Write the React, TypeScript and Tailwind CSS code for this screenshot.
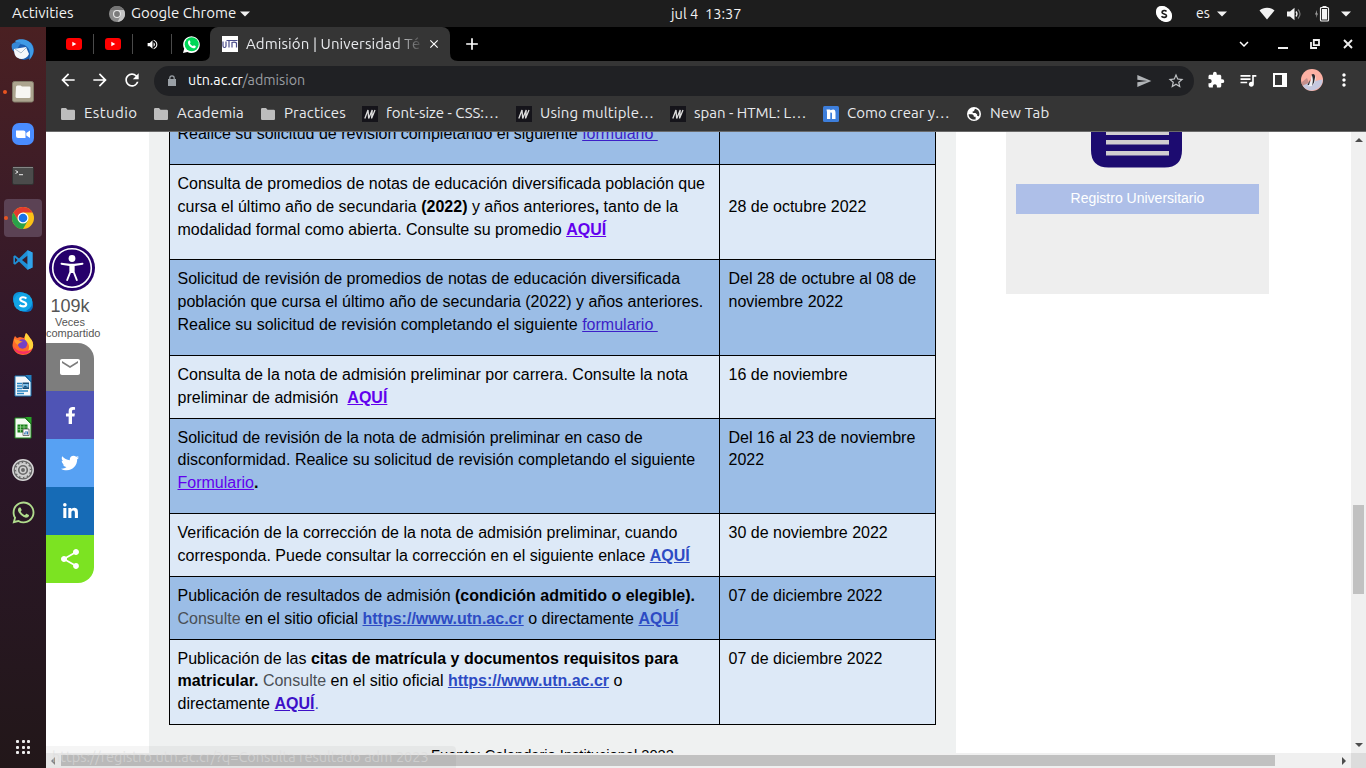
import type { ReactNode } from "react";
import {
  MdArrowBack,
  MdArrowForward,
  MdRefresh,
  MdSend,
  MdStarBorder,
  MdExtension,
  MdQueueMusic,
  MdMoreVert,
  MdEmail,
  MdShare,
  MdClose,
  MdAdd,
  MdVolumeUp,
  MdKeyboardArrowDown,
} from "react-icons/md";
import { FaFacebookF, FaTwitter, FaLinkedinIn, FaWhatsapp } from "react-icons/fa";

/* ---------- Top bar ---------- */

function Caret() {
  return (
    <svg width="10" height="6" viewBox="0 0 10 6" className="shrink-0">
      <path d="M0 .5h10L5 5.5z" fill="#f2f2f2" />
    </svg>
  );
}

function TopBar() {
  return (
    <header className="flex h-[27px] shrink-0 items-center bg-[#1d1d1d] text-[15px] text-[#f2f2f2]">
      <span className="ml-3 w-[97px] whitespace-nowrap">Activities</span>
      <svg width="16" height="16" viewBox="0 0 16 16" className="shrink-0">
        <circle cx="8" cy="8" r="8" fill="#8b8b8b" />
        <path d="M8 4h7A8 8 0 0 1 8.500 16L12 9z" fill="#c4c4c4" />
        <path d="M1 4a8 8 0 0 1 14 0H8z" fill="#747474" />
        <circle cx="8" cy="8" r="4" fill="#e8e8e8" />
        <circle cx="8" cy="8" r="2.900" fill="#7b7b7b" />
      </svg>
      <span className="ml-1.5 w-[109px] whitespace-nowrap">Google Chrome</span>
      <Caret />
      <span className="ml-[421px] w-[485px] text-[14.600px] whitespace-pre">jul 4  13:37</span>
      <svg width="16" height="16" viewBox="0 0 16 16" className="shrink-0">
        <rect x="0" y="0" width="12" height="12" rx="5" fill="#fff" />
        <rect x="4" y="4" width="12" height="12" rx="5" fill="#fff" />
        <circle cx="8" cy="8" r="7" fill="#fff" />
        <path
          d="M10.500 5.400C9.500 4.200 6 4.200 6 6.200c0 2.100 4.500 1.300 4.500 3.500 0 2.100-3.900 2.100-5 .6"
          fill="none"
          stroke="#1d1d1d"
          strokeWidth="1.600"
        />
      </svg>
      <span className="ml-6 w-[21px] text-[14px]">es</span>
      <Caret />
      <svg width="16" height="13" viewBox="0 0 16 13" className="ml-[32px] shrink-0">
        <path d="M.5 3.500C4.500-.3 11.500-.3 15.500 3.500L8 12.500z" fill="#f2f2f2" />
      </svg>
      <svg width="15" height="14" viewBox="0 0 15 14" className="ml-3 shrink-0">
        <path d="M0 4.500h3L7.500.8v12.400L3 9.500H0z" fill="#f2f2f2" />
        <path d="M9 4.500q2 2.500 0 5" stroke="#f2f2f2" strokeWidth="1.300" fill="none" />
        <path d="M11 2.500q4 4.500 0 9" stroke="#777" strokeWidth="1.200" fill="none" />
      </svg>
      <svg width="16" height="16" viewBox="0 0 16 16" className="ml-[12px] shrink-0">
        <path d="M3 4L1 8.500h1.500L2 12l2-4.500H2.800z" fill="#aaa" />
        <path d="M8.500 0h4v2h-4z" fill="#f2f2f2" />
        <rect x="6.500" y="1.500" width="8" height="13.500" rx="1" fill="none" stroke="#f2f2f2" strokeWidth="1.200" />
        <rect x="8" y="3" width="5" height="10.500" fill="#f2f2f2" />
      </svg>
      <span className="ml-[11px] flex">
        <Caret />
      </span>
    </header>
  );
}

/* ---------- Dock ---------- */

function Thunderbird() {
  return (
    <svg width="24" height="24" viewBox="0 0 24 24">
      <circle cx="13" cy="12" r="10" fill="#1b5db0" />
      <path d="M4 3c4-3 14-2 17 4 3 5 1 12-3 15 2-6 1-11-3-14-4-3-9-1-11-5z" fill="#3f9be6" />
      <path d="M1 6c2-2 6-3 9-1L4 14C1 13 0 9 1 6z" fill="#3587d6" />
      <path d="M3 11l12-2 3 7c-2 5-8 6-11 4-3-1-4-5-4-9z" fill="#f4f7fa" />
      <path d="M4 11l6 4 5-5" fill="none" stroke="#aabccc" />
    </svg>
  );
}

function Files() {
  return (
    <svg width="22" height="22" viewBox="0 0 22 22">
      <rect x=".5" y=".5" width="21" height="20.500" rx="2" fill="#aca48f" stroke="#837c6b" />
      <path d="M4 6q0-1.500 1.500-1.500h3L10 5.500h7.500q1 0 1 1v9q0 1.500-1.500 1.500H5q-1.500 0-1.500-1.500z" fill="#f7f6f3" />
    </svg>
  );
}

function Zoom() {
  return (
    <svg width="22" height="22" viewBox="0 0 22 22">
      <rect width="22" height="22" rx="7" fill="#4a8cff" />
      <path d="M4 7.500h7.500q2 0 2 2V15H6q-2 0-2-2zM14.300 10L18 7.500V15l-3.700-2.600z" fill="#fff" />
    </svg>
  );
}

function Terminal() {
  return (
    <svg width="22" height="20" viewBox="0 0 22 20">
      <rect x=".5" y="1" width="21" height="17.500" rx="1.500" fill="#4b4b4b" stroke="#313131" />
      <path d="M1 1.500h20" stroke="#858585" />
      <path d="M3.500 4.500L6 6 3.500 7.500M7 8.700h4" fill="none" stroke="#eee" strokeWidth="1" />
    </svg>
  );
}

function Chrome() {
  return (
    <svg width="22" height="22" viewBox="0 0 22 22">
      <circle cx="11" cy="11" r="11" fill="#fbc116" />
      <path d="M1.470 5.500A11 11 0 0 1 20.530 5.500H11L6.200 13.800z" fill="#e33b2e" />
      <path d="M1.470 5.500A11 11 0 0 0 11 22l4.800-8.200H6.200z" fill="#2aa14a" />
      <circle cx="11" cy="11" r="5.500" fill="#fff" />
      <circle cx="11" cy="11" r="4.300" fill="#1a73e8" />
    </svg>
  );
}

function VsCode() {
  return (
    <svg width="20" height="20" viewBox="0 0 20 20">
      <path
        d="M14.500.3L19.500 2.500v15l-5 2.200L6 11.500 2 14.700.4 13.800V6.200L2 5.300l4 3.200zM14.700 5.500L9 10l5.700 4.500zM2 7.600v4.800L4.500 10z"
        fill="#1f8fd6"
        fillRule="evenodd"
      />
      <path d="M14.500.3L19.500 2.500v15l-5 2.200z" fill="#31a3ea" />
    </svg>
  );
}

function Skype() {
  return (
    <svg width="22" height="22" viewBox="0 0 22 22">
      <rect x="1" y="1" width="14" height="14" rx="6" fill="#0d93d8" />
      <rect x="7" y="7" width="14" height="14" rx="6" fill="#0a6fc2" />
      <circle cx="11" cy="11" r="9.300" fill="#12a5e6" />
      <path
        d="M14.300 7.600C13 5.700 8.200 5.700 8.200 8.300c0 2.900 6 2.100 6 4.900 0 2.800-5 2.600-6.600.8"
        fill="none"
        stroke="#fff"
        strokeWidth="2.200"
      />
    </svg>
  );
}

function Firefox() {
  return (
    <svg width="22" height="22" viewBox="0 0 22 22">
      <path d="M1 9L2 5l1-2 2 2 3-1 4 1 2-5c2 2 3 3 4 5 3 3 3.500 6 3 9-1 5-5 8-10 8S.5 18 .5 12z" fill="#ff6a2b" />
      <path d="M14 0c2 2 3 3 4 5 3 3 3.500 6 3 9-1 2-3 4-5 4 3-6-1-9-3-11-.5-3 0-5 1-7z" fill="#ffd53a" />
      <path d="M1 13c1 5 5 8 10 8 4 0 7-2 9-5-6 4-16 3-19-3z" fill="#f72f63" />
      <circle cx="10.500" cy="11" r="4.700" fill="#7542c4" />
      <path d="M2 6l4 1 5 2c-3 0-5 2-5 3-2-1-4-3-4-6z" fill="#ff9a2b" />
    </svg>
  );
}

function Writer() {
  return (
    <svg width="18" height="22" viewBox="0 0 18 22">
      <path d="M1 1h10l6 6v14H1z" fill="#f4f7fa" stroke="#1a76b5" />
      <path d="M11 0h6.500v7z" fill="#2180c0" />
      <path d="M3 8.500h5M3 11h5M3 13.500h5M3 16h11M3 18.500h7" stroke="#2a86c2" strokeWidth="1.300" />
      <path d="M8.500 7.500h6.500v6.500H8.500z" fill="#174f79" />
      <path d="M9 9h5.500v3.500H9z" fill="#7fc0ea" />
      <path d="M9 12.500l2-2 3.500 2z" fill="#174f79" />
    </svg>
  );
}

function Calc() {
  return (
    <svg width="18" height="22" viewBox="0 0 18 22">
      <path d="M1 1h10l6 6v14H1z" fill="#f4faf2" stroke="#1b8a1b" />
      <path d="M11 0h6.500v7z" fill="#27a427" />
      <path d="M3.500 7.500h10v8h-10z" fill="#178017" />
      <path d="M3.500 10h10M3.500 12.700h10M6.500 7.500v8M10 7.500v8" stroke="#a8dba0" strokeWidth=".7" />
      <path d="M9 12h6v6.500H9z" fill="#fff" stroke="#555" strokeWidth=".8" />
      <path d="M10.700 17.500v-2M12 17.500V14M13.500 17.500v-3" stroke="#2a70b0" />
    </svg>
  );
}

function Settings() {
  return (
    <svg width="22" height="22" viewBox="0 0 22 22">
      <circle cx="11" cy="11" r="10.200" fill="#686868" stroke="#d5d5d5" strokeWidth="1.500" />
      <circle cx="11" cy="11" r="7.400" fill="none" stroke="#d0d0d0" strokeWidth="1.600" strokeDasharray="2.400 1.470" />
      <circle cx="11" cy="11" r="6" fill="none" stroke="#d0d0d0" strokeWidth="1.800" />
      <circle cx="11" cy="11" r="2.700" fill="none" stroke="#d0d0d0" strokeWidth="1.500" />
    </svg>
  );
}

const dockItems: { name: string; icon: ReactNode; running?: boolean; active?: boolean }[] = [
  { name: "mail", icon: <Thunderbird /> },
  { name: "files", icon: <Files />, running: true },
  { name: "zoom", icon: <Zoom /> },
  { name: "terminal", icon: <Terminal /> },
  { name: "chrome", icon: <Chrome />, running: true, active: true },
  { name: "code", icon: <VsCode /> },
  { name: "skype", icon: <Skype /> },
  { name: "firefox", icon: <Firefox /> },
  { name: "writer", icon: <Writer /> },
  { name: "calc", icon: <Calc /> },
  { name: "settings", icon: <Settings /> },
  { name: "whatsapp", icon: <FaWhatsapp size={25} color="#b0dc8c" /> },
];

function Dock() {
  return (
    <nav className="flex w-[46px] shrink-0 flex-col items-center bg-linear-to-b from-[#4a2022] via-[#2d162b] via-50% to-[#221719] pt-0.5">
      {dockItems.map((item) => (
        <div key={item.name} className="flex h-[42px] w-full items-center">
          <span className="flex w-1 justify-end">
            {item.running && !item.active && <i className="-mr-[3px] size-1 shrink-0 rounded-full bg-[#e95420]" />}
          </span>
          <span
            className={
              item.active
                ? "relative flex size-[38px] items-center justify-center rounded-[4px] bg-[#5b4254]"
                : "flex size-[38px] items-center justify-center"
            }
          >
            {item.active && <i className="absolute top-[17px] left-0 size-1 rounded-full bg-[#e95420]" />}
            {item.icon}
          </span>
        </div>
      ))}
      <div className="mt-auto mb-[14px] grid grid-cols-3 gap-[2.500px]">
        {Array.from({ length: 9 }, (_, i) => (
          <i key={i} className="size-[3px] rounded-[1px] bg-[#eee]" />
        ))}
      </div>
    </nav>
  );
}

/* ---------- Browser chrome ---------- */

function YouTube() {
  return (
    <svg width="16" height="12" viewBox="0 0 16 12" className="shrink-0">
      <rect width="16" height="12" rx="3" fill="#f00" />
      <path d="M6.300 3.700L10.300 6l-4 2.300z" fill="#fff" />
    </svg>
  );
}

function TabStrip() {
  return (
    <div className="flex h-[34px] shrink-0 items-center bg-black text-[#e8eaed]">
      <div className="flex h-full w-[164px] items-center">
        <span className="ml-5 flex w-[27px]">
          <YouTube />
        </span>
        <i className="h-5 w-px bg-[#4a4a4a]" />
        <span className="ml-[11px] flex w-[27px]">
          <YouTube />
        </span>
        <i className="h-5 w-px bg-[#4a4a4a]" />
        <span className="ml-[13px] flex w-[25px]">
          <MdVolumeUp size={13} color="#fff" />
        </span>
        <i className="h-5 w-px bg-[#4a4a4a]" />
        <svg width="17" height="17" viewBox="0 0 17 17" className="ml-[11px] shrink-0">
          <path d="M0 17l1.200-4.300A8.300 8.300 0 1 1 4.400 15.900z" fill="#fff" />
          <circle cx="8.700" cy="8.300" r="7" fill="#00d757" />
          <path
            d="M5.600 4.700c.7-.6 1.100-.5 1.400.2l.5 1.200c.2.600-.8 1-.5 1.500.7 1.200 1.500 1.900 2.700 2.400.5.200.8-1 1.300-.8l1.500.7c.6.300.2 1.600-.5 2-1.200.8-3 .1-4.700-1.200C5.700 9.500 4 6.300 5.600 4.700z"
            fill="#fff"
          />
        </svg>
      </div>
      <div className="relative flex h-full w-[240px] items-center rounded-t-lg bg-[#353535]">
        <svg width="8" height="8" viewBox="0 0 8 8" className="absolute bottom-0 -left-2">
          <path d="M8 0v8H0Q8 8 8 0z" fill="#353535" />
        </svg>
        <svg width="8" height="8" viewBox="0 0 8 8" className="absolute -right-2 bottom-0">
          <path d="M0 0v8h8Q0 8 0 0z" fill="#353535" />
        </svg>
        <svg width="16" height="16" viewBox="0 0 16 16" className="ml-3 shrink-0">
          <rect width="16" height="16" fill="#fff" />
          <path
            d="M1 5.500V10q0 1.500 1.500 1.500T4 10V5.500M4.500 4.500h11M7 4.500v7M10 11.500V6.500q2.700-1 4.500.5v4.500"
            fill="none"
            stroke="#4a4c8a"
            strokeWidth="1.200"
          />
        </svg>
        <span className="ml-2 w-[178px] [mask-image:linear-gradient(to_right,black_150px,transparent_178px)] text-[15px] tracking-[0.1px] whitespace-nowrap">
          Admisión | Universidad Té
        </span>
        <MdClose size={14} className="ml-[3px] shrink-0" color="#fff" />
      </div>
      <MdAdd size={20} color="#fff" className="ml-3" />
      <div className="ml-auto flex h-full items-center">
        <MdKeyboardArrowDown size={18} color="#fff" className="mr-[25px]" />
        <i className="mt-2 mr-[22px] h-0.5 w-2.5 bg-[#eee]" />
        <svg width="10" height="10" viewBox="0 0 10 10" className="mr-[23px]">
          <path d="M3.800 1h5.200v5.200H3.800zM1 3v6h6" fill="none" stroke="#eee" strokeWidth="1.800" />
        </svg>
        <svg width="10" height="10" viewBox="0 0 10 10" className="mr-[13px]">
          <path d="M1 1l8 8M9 1L1 9" stroke="#eee" strokeWidth="1.900" />
        </svg>
      </div>
    </div>
  );
}

function Toolbar() {
  return (
    <div className="flex h-[37px] shrink-0 items-center bg-[#353535]">
      <div className="flex w-[108px] items-center gap-3 pl-3 text-white">
        <MdArrowBack size={20} />
        <MdArrowForward size={20} />
        <MdRefresh size={20} />
      </div>
      <div className="mt-0.5 flex h-[30px] w-[1040px] items-center rounded-full bg-[#202124] pl-[14px] text-[14.250px]">
        <svg width="8" height="11" viewBox="0 0 8 11">
          <path d="M0 4h8v7H0z" fill="#9aa0a6" />
          <path d="M1.800 4.500V3a2.200 2.200 0 0 1 4.400 0v1.500" fill="none" stroke="#9aa0a6" strokeWidth="1.200" />
        </svg>
        <span className="ml-[12px] whitespace-nowrap text-[#9a9da1]">
          <span className="text-white">utn.ac.cr</span>/admision
        </span>
        <MdSend size={16} color="#b0b3b6" className="ml-auto" />
        <MdStarBorder size={18} color="#c0c3c6" className="mr-[9px] ml-[15px]" />
      </div>
      <div className="flex flex-1 items-center text-white">
        <MdExtension size={18} className="ml-[13px]" />
        <MdQueueMusic size={20} className="ml-[13px]" />
        <svg width="14" height="14" viewBox="0 0 14 14" className="ml-[15px]">
          <path d="M0 0h14v14H0zM2 2v10h7V2z" fill="#fff" fillRule="evenodd" />
        </svg>
        <svg width="22" height="22" viewBox="0 0 22 22" className="ml-[14px]">
          <circle cx="11" cy="11" r="11" fill="#fdb1a4" />
          <path d="M3 14l6-1 12.700-2.500A11 11 0 0 1 2 17z" fill="#c5c8df" />
          <path d="M.3 13.500L6 9l2 5-6.500 2.500z" fill="#c58f8c" />
          <path d="M12 5.500c3 1 3 4 2 7.500l-3 4-4 .3 3-5.300c0-3 0-5 2-6.500z" fill="#eeeef2" />
          <path d="M10.500 5.500c2-1.500 4 0 3.500 3l-1 5-2 3.300c1-4 1.500-7-.5-11.300zM9.500 10L6.500 16H8z" fill="#2b2b30" />
        </svg>
        <MdMoreVert size={20} className="ml-[11px]" />
      </div>
    </div>
  );
}

function MdnIcon() {
  return (
    <svg width="16" height="16" viewBox="0 0 16 16" className="shrink-0">
      <rect width="16" height="16" fill="#15141a" />
      <path d="M2.800 12.500L6 4l.7 8.500L10.200 4l-.6 8.500M9.600 12.300L13 4" fill="none" stroke="#dcdcdc" strokeWidth="1.300" />
    </svg>
  );
}

function NIcon() {
  return (
    <svg width="16" height="16" viewBox="0 0 16 16" className="shrink-0">
      <rect width="16" height="16" rx="1.500" fill="#3d7edb" />
      <path d="M3.500 3.500H7l.5.8Q12.500 2 12.500 7v6H9V7.500Q9 6 7.300 6.500V13H4V6z" fill="#fff" />
    </svg>
  );
}

function Globe() {
  return (
    <svg width="14" height="14" viewBox="0 0 14 14" className="shrink-0">
      <circle cx="7" cy="7" r="7" fill="#fff" />
      <path
        d="M1.600 7.200h3.200q1.800.2 2 1.700v.8h1.800v2.700c-3 .8-7-1-7-5.200zM8 1.700c2.800.4 4.400 2.800 4.400 5.300 0 1-.2 1.800-.6 2.500-.6-.7-1-.6-1.600-.6V7.500L8.500 6H5.700V4.300h1.200z"
        fill="#353535"
      />
    </svg>
  );
}

const folder = (
  <svg width="14" height="12" viewBox="0 0 14 12" className="shrink-0">
    <path d="M0 1.200Q0 0 1.200 0H5l1.500 1.700h6.300Q14 1.700 14 2.900v7.900q0 1.200-1.200 1.200H1.200Q0 12 0 10.800z" fill="#bdbdbd" />
  </svg>
);

function Bookmark({ icon, className = "", children }: { icon: ReactNode; className?: string; children: ReactNode }) {
  return (
    <div className={`flex shrink-0 items-center ${className}`}>
      <span className="flex w-4 shrink-0 justify-center">{icon}</span>
      <span className="ml-2 whitespace-nowrap">{children}</span>
    </div>
  );
}

function Bookmarks() {
  return (
    <div className="flex h-[34px] shrink-0 items-center border-b border-[#6a6a6a] bg-[#353535] pt-px pb-[3px] pl-[14px] text-[15px] tracking-[0.150px] text-[#e8eaed]">
      <Bookmark icon={folder} className="w-[93px] tracking-[0.400px]">Estudio</Bookmark>
      <Bookmark icon={folder} className="w-[107px]">Academia</Bookmark>
      <Bookmark icon={folder} className="w-[102px]">Practices</Bookmark>
      <Bookmark icon={<MdnIcon />} className="w-[154px] tracking-normal">font-size - CSS:…</Bookmark>
      <Bookmark icon={<MdnIcon />} className="w-[154px]">Using multiple…</Bookmark>
      <Bookmark icon={<MdnIcon />} className="w-[153px] tracking-normal">span - HTML: L…</Bookmark>
      <Bookmark icon={<NIcon />} className="w-[143px] tracking-normal">Como crear y…</Bookmark>
      <Bookmark icon={<Globe />}>New Tab</Bookmark>
    </div>
  );
}

/* ---------- Page ---------- */

function SocialRail() {
  return (
    <aside className="w-[103px] shrink-0 pt-[113px] text-[#555]">
      <svg width="46" height="46" viewBox="0 0 46 46" className="ml-[3px] block">
        <circle cx="23" cy="23" r="23" fill="#26006b" />
        <circle cx="23" cy="23" r="19.300" fill="none" stroke="#fff" strokeWidth="1.600" />
        <circle cx="23" cy="13.500" r="3.400" fill="#fff" />
        <path
          d="M12.500 18.700l8 1.300h5l8-1.300M21.300 20.500h3.400v6.500h-3.400zM21.500 26.500l-3.300 8.500M24.500 26.500l3.300 8.500"
          fill="#fff"
          stroke="#fff"
          strokeWidth="1.900"
          strokeLinecap="round"
        />
      </svg>
      <div className="mt-[5px] w-[48px] text-center text-[18px] leading-5">109k</div>
      <div className="mt-px w-[54px] text-[11px] leading-[11px] whitespace-nowrap">
        <span className="block w-[48px] text-center">Veces</span>
        <span className="block">compartido</span>
      </div>
      <div className="mt-1 flex w-12 flex-col overflow-hidden rounded-r-2xl text-white">
        <span className="flex h-12 items-center justify-center bg-[#7d7d7d]"><MdEmail size={24} /></span>
        <span className="flex h-12 items-center justify-center bg-[#4f54b5]"><FaFacebookF size={17} /></span>
        <span className="flex h-12 items-center justify-center bg-[#57a1f3]"><FaTwitter size={18} /></span>
        <span className="flex h-12 items-center justify-center bg-[#166bb6]"><FaLinkedinIn size={17} /></span>
        <span className="flex h-12 items-center justify-center bg-[#7ce322]"><MdShare size={24} /></span>
      </div>
    </aside>
  );
}

function Link({ className, children }: { className: string; children: ReactNode }) {
  return <a className={`underline ${className}`}>{children}</a>;
}

function Row({ shade, className, date, inset = "pt-[7.900px]", dateClass = "", children }: {
  shade: "dark" | "light";
  className: string;
  date: ReactNode;
  inset?: string;
  dateClass?: string;
  children: ReactNode;
}) {
  return (
    <div className={`flex border-b border-black ${shade === "dark" ? "bg-[#9bbde6]" : "bg-[#dde9f7]"} ${className}`}>
      <div className={`w-[550px] border-r border-black pl-[7.500px] whitespace-nowrap ${inset}`}>{children}</div>
      <div className={`flex-1 pl-[8.500px] whitespace-nowrap ${inset} ${dateClass}`}>{date}</div>
    </div>
  );
}

function Schedule() {
  return (
    <main className="w-[807px] shrink-0 overflow-hidden bg-[#eff1f1] px-5">
      <div className="w-[767px] border-x border-black text-[16px] leading-[22.860px] text-black">
        <Row shade="dark" className="h-[33px]" inset="" date="">
          <div className="-mt-[9.500px]">
            Realice su solicitud de revisión completando el siguiente <Link className="text-[#3c1fc8]">formulario&nbsp;</Link>
          </div>
        </Row>
        <Row shade="light" className="h-[95px]" date="28 de octubre 2022" dateClass="mt-[22.860px]">
          Consulta de promedios de notas de educación diversificada población que
          <br />
          cursa el último año de secundaria <b>(2022)</b> y años anteriores<b>,</b> tanto de la
          <br />
          modalidad formal como abierta. Consulte su promedio <Link className="font-bold text-[#6200ee]">AQUÍ</Link>
        </Row>
        <Row shade="dark" className="h-[96px]" date={<>Del 28 de octubre al 08 de<br />noviembre 2022</>}>
          Solicitud de revisión de promedios de notas de educación diversificada
          <br />
          población que cursa el último año de secundaria (2022) y años anteriores.
          <br />
          Realice su solicitud de revisión completando el siguiente <Link className="text-[#3c1fc8]">formulario&nbsp;</Link>
        </Row>
        <Row shade="light" className="h-[63px]" date="16 de noviembre">
          Consulta de la nota de admisión preliminar por carrera. Consulte la nota
          <br />
          preliminar de admisión &nbsp;<Link className="font-bold text-[#6200ee]">AQUÍ</Link>
        </Row>
        <Row shade="dark" className="h-[95px]" inset="pt-[7.640px]" date={<>Del 16 al 23 de noviembre<br />2022</>}>
          Solicitud de revisión de la nota de admisión preliminar en caso de
          <br />
          disconformidad. Realice su solicitud de revisión completando el siguiente
          <br />
          <Link className="text-[#6200ee]">Formulario</Link><b>.</b>
        </Row>
        <Row shade="light" className="h-[63px]" date="30 de noviembre 2022">
          Verificación de la corrección de la nota de admisión preliminar, cuando
          <br />
          corresponda. Puede consultar la corrección en el siguiente enlace <Link className="font-bold text-[#2d4bc4]">AQUÍ</Link>
        </Row>
        <Row shade="dark" className="h-[63px]" date="07 de diciembre 2022">
          Publicación de resultados de admisión <b>(condición admitido o elegible).</b>
          <br />
          <span className="text-[#4a4f55]">Consulte</span> en el sitio oficial <Link className="font-bold text-[#2d4bc4]">https://www.utn.ac.cr</Link> o directamente{" "}
          <Link className="font-bold text-[#2d4bc4]">AQUÍ</Link>
        </Row>
        <Row shade="light" className="h-[85px]" inset="pt-[7.500px]" date="07 de diciembre 2022">
          Publicación de las <b>citas de matrícula y documentos requisitos para</b>
          <br />
          <b>matricular.</b> <span className="text-[#4a4f55]">Consulte</span> en el sitio oficial{" "}
          <Link className="font-bold text-[#2d4bc4]">https://www.utn.ac.cr</Link> o
          <br />
          directamente <Link className="font-bold text-[#3d10c8]">AQUÍ</Link><span className="text-[#2d4bc4]">.</span>
        </Row>
      </div>
      <p className="mt-5 text-center text-[14.670px] leading-5 text-black">Fuente: Calendario Institucional 2022</p>
    </main>
  );
}

function SideCard() {
  return (
    <aside className="ml-[50px] h-[162px] w-[263px] shrink-0 bg-[#eee] px-2.5">
      <svg width="91" height="36" viewBox="0 0 91 36" className="ml-[75px] block">
        <path d="M0 0h91v18q0 17.500-17.500 17.500h-56Q0 35.500 0 18z" fill="#1c0b70" />
        <path d="M15 0h63v3H15zM15 8h63v4.500H15zM15 19h63v4.500H15z" fill="#d0cdd0" />
      </svg>
      <div className="mt-4 h-[30px] bg-[#aebfe8] text-center text-[14px] leading-[29px] text-white">
        Registro Universitario
      </div>
    </aside>
  );
}

function VerticalScrollbar() {
  return (
    <div className="flex w-[15px] shrink-0 flex-col items-center bg-[#f0f0f0] py-1.5">
      <svg width="8" height="4" viewBox="0 0 8 4"><path d="M0 4l4-4 4 4z" fill="#4d4d4d" /></svg>
      <div className="mt-[363px] h-[89px] w-[11px] bg-[#c1c1c1]" />
      <svg width="8" height="4" viewBox="0 0 8 4" className="mt-auto"><path d="M0 0l4 4 4-4z" fill="#4d4d4d" /></svg>
    </div>
  );
}

function HorizontalScrollbar() {
  return (
    <div className="flex h-[15px] shrink-0 bg-[#f0f0f0]">
      <div className="flex flex-1 items-center pl-[5px]">
        <svg width="4" height="8" viewBox="0 0 4 8"><path d="M4 0L0 4l4 4z" fill="#8a8a8a" /></svg>
        <div className="ml-1.5 h-[11px] w-[1214px] bg-[#c1c1c1]" />
        <svg width="4" height="8" viewBox="0 0 4 8" className="mr-[5px] ml-auto"><path d="M0 0l4 4-4 4z" fill="#4d4d4d" /></svg>
      </div>
      <div className="w-[15px] bg-[#dcdcdc]" />
    </div>
  );
}

export default function App() {
  return (
    <div className="flex h-[768px] w-[1366px] flex-col overflow-hidden bg-white font-['Ubuntu','Noto_Sans',sans-serif]">
      <TopBar />
      <div className="flex min-h-0 flex-1">
        <Dock />
        <div className="relative flex min-w-0 flex-1 flex-col">
          <TabStrip />
          <Toolbar />
          <Bookmarks />
          <div className="flex min-h-0 flex-1 overflow-hidden font-['Liberation_Sans',sans-serif]">
            <SocialRail />
            <Schedule />
            <SideCard />
            <div className="flex-1" />
            <VerticalScrollbar />
          </div>
          <HorizontalScrollbar />
          <div className="absolute bottom-0 left-0 h-[22px] w-[410px] rounded-tr-[4px] bg-black/4 pl-[6px] text-[14.500px] leading-[22px] whitespace-nowrap text-[#dcdcdc]/60">
            https://registro.utn.ac.cr/?q=Consulta resultado adm 2023
          </div>
        </div>
      </div>
    </div>
  );
}
